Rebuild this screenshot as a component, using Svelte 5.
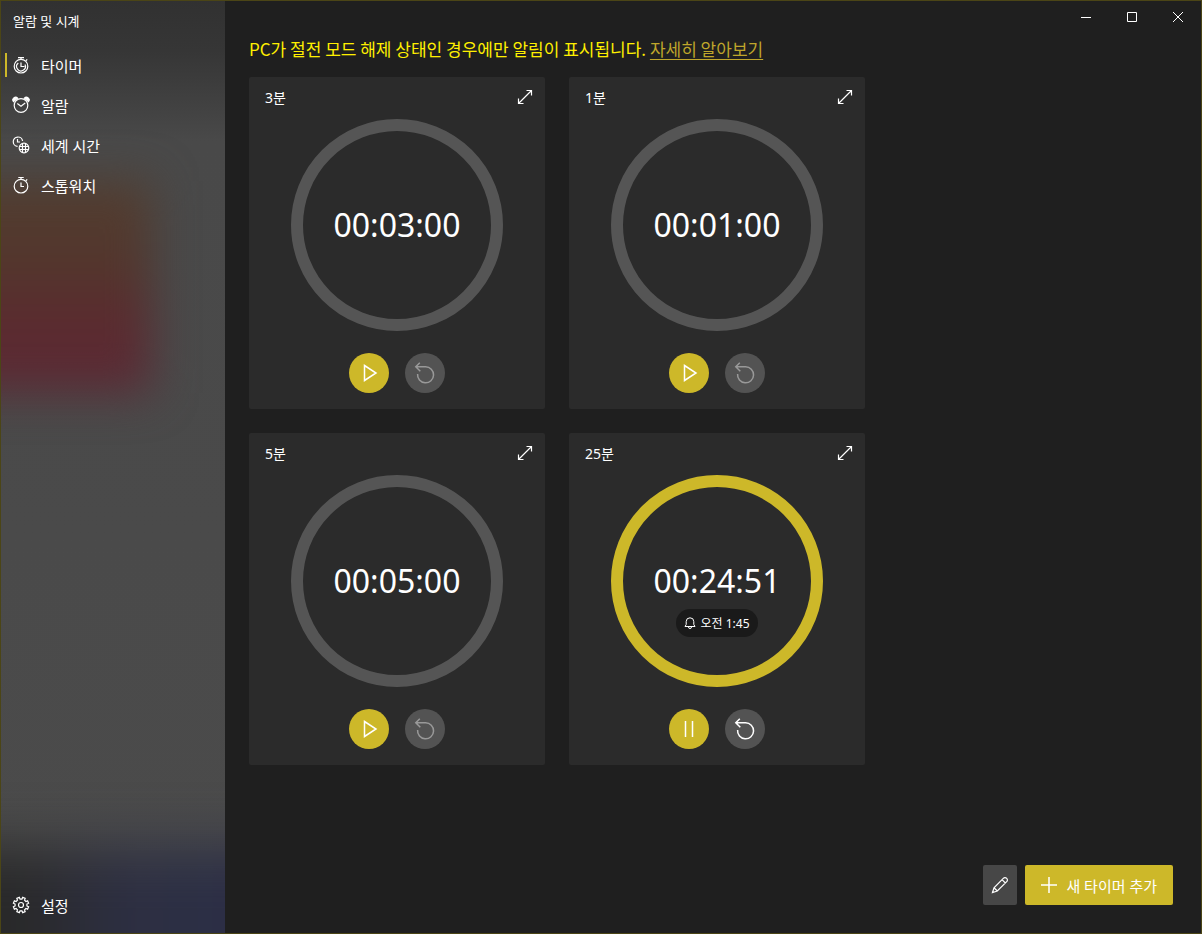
<script lang="ts">
  type Timer = {
    name: string;
    time: string;
    running: boolean;
    ends?: string;
  };

  const pages = [
    { id: "timer", label: "타이머" },
    { id: "alarm", label: "알람" },
    { id: "world", label: "세계 시간" },
    { id: "stopwatch", label: "스톱워치" },
  ];

  let current = $state("timer");

  let timers: Timer[] = $state([
    { name: "3분", time: "00:03:00", running: false },
    { name: "1분", time: "00:01:00", running: false },
    { name: "5분", time: "00:05:00", running: false },
    { name: "25분", time: "00:24:51", running: true, ends: "오전 1:45" },
  ]);

  // Outline of the settings cog, one tooth per step around the circle.
  function cog(teeth: number, outer: number, inner: number): string {
    const step = (Math.PI * 2) / teeth;
    const points: string[] = [];
    for (let i = 0; i < teeth; i++) {
      for (const [offset, r] of [
        [-0.3, inner],
        [-0.22, outer],
        [0.22, outer],
        [0.3, inner],
      ]) {
        const a = (i + 0.5 + offset) * step;
        points.push(`${(9 + r * Math.cos(a)).toFixed(2)} ${(9 + r * Math.sin(a)).toFixed(2)}`);
      }
    }
    return `M${points.join("L")}Z`;
  }
</script>

{#snippet icon(id: string)}
  <svg class="icon" viewBox="0 0 18 18" aria-hidden="true">
    {#if id == "timer"}
      <circle cx="9" cy="10.2" r="6.8" />
      <path d="M9 6.5V10.5H12.5M6.3 7A4.4 4.4 0 1 0 13 8.6M6 1.6H12M9 1.6V3.5M13.8 4.8L15.2 3.4" />
    {:else if id == "alarm"}
      <circle cx="9" cy="9.5" r="6.8" />
      <path d="M5.3 7.6L9 10.2L13.2 7" />
      <path class="solid" d="M1.5 5.6A2.6 2.6 0 0 1 5.6 2.2ZM16.5 5.6A2.6 2.6 0 0 0 12.4 2.2Z" />
    {:else if id == "world"}
      <path d="M5.6 10.4A4.7 4.7 0 1 1 10.6 5M5.5 3V6H8" />
      <circle cx="12" cy="12" r="4.8" />
      <path d="M7.5 10.5H16.5M7.5 13.5H16.5M10.5 7.5V16.5M13.5 7.5V16.5" />
    {:else if id == "stopwatch"}
      <circle cx="9" cy="10.2" r="6.8" />
      <path d="M9 6.5V10.5H12M6.3 1.5H11.7M9 1.5V3.5M13.8 4.8L15.2 3.4" />
    {:else}
      <path d={cog(8, 7.8, 6)} />
      <circle cx="9" cy="9" r="2.5" />
    {/if}
  </svg>
{/snippet}

<div class="window">
  <aside>
    <h1>알람 및 시계</h1>
    <nav>
      {#each pages as page}
        <button class:active={current == page.id} onclick={() => (current = page.id)}>
          {@render icon(page.id)}
          {page.label}
        </button>
      {/each}
      <button class="settings">
        {@render icon("settings")}
        설정
      </button>
    </nav>
  </aside>

  <main>
    <div class="titlebar">
      <button aria-label="최소화">
        <svg viewBox="0 0 10 10"><path d="M0 5.5H10" /></svg>
      </button>
      <button aria-label="최대화">
        <svg viewBox="0 0 10 10"><path d="M0.5 0.5H9.5V9.5H0.5Z" /></svg>
      </button>
      <button aria-label="닫기">
        <svg viewBox="0 0 10 10"><path d="M0 0L10 10M10 0L0 10" /></svg>
      </button>
    </div>

    <p class="notice">
      PC가 절전 모드 해제 상태인 경우에만 알림이 표시됩니다. <a href="#more">자세히 알아보기</a>
    </p>

    <div class="timers">
      {#each timers as timer}
        <section class:running={timer.running}>
          <header>
            <h2>{timer.name}</h2>
            <button class="expand" aria-label="확장">
              <svg viewBox="0 0 16 16"><path d="M1.5 14.5L14.5 1.5M9.5 1.5H14.5V6.5M1.5 9.5V14.5H6.5" /></svg>
            </button>
          </header>
          <div class="dial">
            <time>{timer.time}</time>
            {#if timer.ends}
              <span class="ends">
                <svg viewBox="0 0 12 12" aria-hidden="true">
                  <path d="M1 9.5H11L9.8 7.5V4.6A3.8 3.8 0 0 0 2.2 4.6V7.5ZM4.5 10A1.5 1.5 0 0 0 7.5 10" />
                </svg>
                {timer.ends}
              </span>
            {/if}
          </div>
          <div class="controls">
            <button
              class="play"
              aria-label={timer.running ? "일시 중지" : "시작"}
              onclick={() => (timer.running = !timer.running)}
            >
              <svg viewBox="0 0 40 40">
                {#if timer.running}
                  <path d="M16.5 12V28M23.5 12V28" />
                {:else}
                  <path d="M15.5 12.5L27 20L15.5 27.5Z" />
                {/if}
              </svg>
            </button>
            <button class="reset" aria-label="다시 설정" disabled={!timer.running}>
              <svg viewBox="0 0 40 40">
                <path d="M12.6 21A8 8 0 1 0 20.5 13.8H10.8M14.8 9.8L10.8 13.8L15.3 18.2" />
              </svg>
            </button>
          </div>
        </section>
      {/each}
    </div>

    <footer>
      <button class="edit" aria-label="타이머 편집">
        <svg viewBox="0 0 18 18">
          <path d="M1.5 16.5L3 11.8L12.3 2.3A2.3 2.3 0 0 1 15.7 5.7L6.3 15ZM3 11.8L6.3 15M11 3.6L14.4 7" />
        </svg>
      </button>
      <button class="add">
        <svg viewBox="0 0 16 16" aria-hidden="true"><path d="M8 0V16M0 8H16" /></svg>
        새 타이머 추가
      </button>
    </footer>
  </main>
</div>

<style>
  :global(body) {
    background: #1f1f1f;
  }

  .window {
    --accent: #cdb829;
    display: grid;
    grid-template-columns: 224px 1fr;
    box-sizing: border-box;
    min-height: 100vh;
    border: 1px solid #4b4516;
    background: #1f1f1f;
    color: #fff;
    font-family: "Noto Sans", "Noto Sans CJK KR", sans-serif;
    font-size: 15px;
  }

  h1,
  h2,
  p {
    margin: 0;
    font-weight: 400;
  }

  button {
    display: flex;
    align-items: center;
    justify-content: center;
    padding: 0;
    border: 0;
    background: none;
    color: inherit;
    font: inherit;
  }

  svg {
    fill: none;
    stroke: currentColor;
  }

  aside {
    position: relative;
    display: flex;
    flex-direction: column;
    overflow: hidden;
    isolation: isolate;
    background: linear-gradient(#313131, #363636 50px, #494949 140px, #4b4b4b);
  }

  /* Blurred desktop showing through the translucent pane */
  aside::before,
  aside::after {
    content: "";
    position: absolute;
    z-index: -1;
  }

  aside::before {
    top: 180px;
    left: -80px;
    width: 230px;
    height: 212px;
    background: linear-gradient(#523e30, #53362d 40%, #5b2b2f 65%, #5b2a36);
    filter: blur(22px);
  }

  aside::after {
    bottom: -80px;
    left: -80px;
    right: -80px;
    height: 164px;
    background: linear-gradient(90deg, #292929 100px, #2d2f42 200px, #2b2e48);
    filter: blur(28px);
  }

  h1 {
    margin-bottom: 4px;
    padding-left: 12px;
    font-size: 13px;
    line-height: 40px;
  }

  nav {
    display: flex;
    flex: 1;
    flex-direction: column;
    padding-bottom: 8px;
  }

  nav button {
    justify-content: flex-start;
    gap: 11px;
    height: 40px;
    padding-left: 7px;
    border-left: 4px solid transparent;
    position: relative;
  }

  nav button.active::before {
    content: "";
    position: absolute;
    left: 0;
    width: 2px;
    height: 24px;
    background: var(--accent);
  }

  .settings {
    margin-top: auto;
  }

  .icon {
    width: 18px;
    height: 18px;
    stroke-width: 1.2;
  }

  .solid {
    fill: currentColor;
  }

  main {
    display: flex;
    flex-direction: column;
    min-width: 0;
  }

  .titlebar {
    display: flex;
    justify-content: flex-end;
  }

  .titlebar button {
    width: 46px;
    height: 32px;
  }

  .titlebar svg {
    width: 10px;
    height: 10px;
  }

  .notice {
    padding: 0 24px 12px;
    color: #fff000;
    font-family: "Noto Sans CJK KR", sans-serif;
    font-size: 17px;
    line-height: 32px;
  }

  .notice a {
    color: #bfa62b;
    text-underline-offset: 3px;
    text-decoration-thickness: 1px;
  }

  .timers {
    display: grid;
    grid-template-columns: repeat(auto-fill, 296px);
    gap: 24px;
    padding: 0 28px 24px 24px;
  }

  section {
    border-radius: 2px;
    background: #2b2b2b;
    padding-bottom: 16px;
  }

  header {
    display: flex;
    align-items: center;
    justify-content: space-between;
    height: 40px;
    margin-bottom: 2px;
    padding: 0 12px 0 16px;
  }

  h2 {
    font-size: 14px;
  }

  .expand svg {
    width: 16px;
    height: 16px;
    stroke-width: 1.2;
  }

  .dial {
    position: relative;
    display: grid;
    place-items: center;
    box-sizing: border-box;
    width: 212px;
    height: 212px;
    margin: 0 auto 22px;
    border: 12px solid #555;
    border-radius: 50%;
  }

  .running .dial {
    border-color: var(--accent);
  }

  time {
    font-size: 32px;
    line-height: 40px;
  }

  .ends {
    position: absolute;
    top: 122px;
    display: flex;
    align-items: center;
    gap: 4px;
    height: 28px;
    padding: 0 8px;
    border-radius: 14px;
    background: #1a1a1a;
    font-size: 12px;
    white-space: nowrap;
  }

  .ends svg {
    width: 12px;
    height: 12px;
  }

  .controls {
    display: flex;
    justify-content: center;
    gap: 16px;
  }

  .controls button {
    width: 40px;
    height: 40px;
    border-radius: 50%;
    background: #535353;
  }

  .controls svg {
    width: 40px;
    height: 40px;
    stroke-width: 1.5;
  }

  .controls .play {
    background: var(--accent);
  }

  .controls .reset:disabled {
    color: #999;
  }

  footer {
    display: flex;
    justify-content: flex-end;
    gap: 8px;
    margin-top: auto;
    padding: 0 28px 28px;
  }

  footer button {
    height: 40px;
    border-radius: 2px;
  }

  .edit {
    width: 34px;
    background: #474747;
  }

  .edit svg {
    width: 18px;
    height: 18px;
    stroke-width: 1.2;
  }

  .add {
    gap: 9px;
    padding: 0 16px;
    background: var(--accent);
  }

  .add svg {
    width: 16px;
    height: 16px;
    stroke-width: 1.5;
  }
</style>
